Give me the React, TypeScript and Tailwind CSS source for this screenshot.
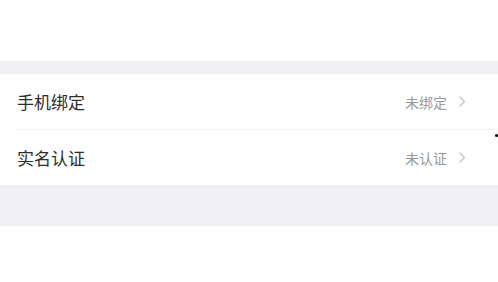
const rows = [
  { label: '手机绑定', value: '未绑定' },
  { label: '实名认证', value: '未认证' },
]

function Chevron() {
  return (
    <svg className="w-[9px] h-[11px] shrink-0" viewBox="0 0 9 11" fill="none" stroke="#c4c4c8" strokeWidth={1.4}>
      <path d="M2 1l4.5 4.5L2 10" strokeLinecap="round" strokeLinejoin="round" />
    </svg>
  )
}

export default function App() {
  return (
    <div className="relative w-[498px] h-[282px] bg-white overflow-hidden" style={{ fontFamily: '"Noto Sans CJK SC", "Noto Sans", sans-serif' }}>
      <div className="h-[61px]" />
      <div className="h-[13px] bg-[#efeff4]" />
      <div className="bg-white">
        {rows.map((row, i) => (
          <div key={row.label}>
            {i > 0 && <div className="ml-[16px] h-px bg-[#f2f2f4]" />}
            <div className="h-[55px] flex items-center pl-[17px] pr-[31px]">
              <span className="flex-1 text-[17px] text-[#2e2e2e] leading-none">{row.label}</span>
              <span className="text-[14px] text-[#999999] leading-none mr-[11px]">{row.value}</span>
              <Chevron />
            </div>
          </div>
        ))}
      </div>
      <div className="h-[41px] bg-[#efeff4]" />
      <div className="absolute left-[495px] top-[134px] w-[3px] h-[3px] bg-black rounded-full" />
    </div>
  )
}
